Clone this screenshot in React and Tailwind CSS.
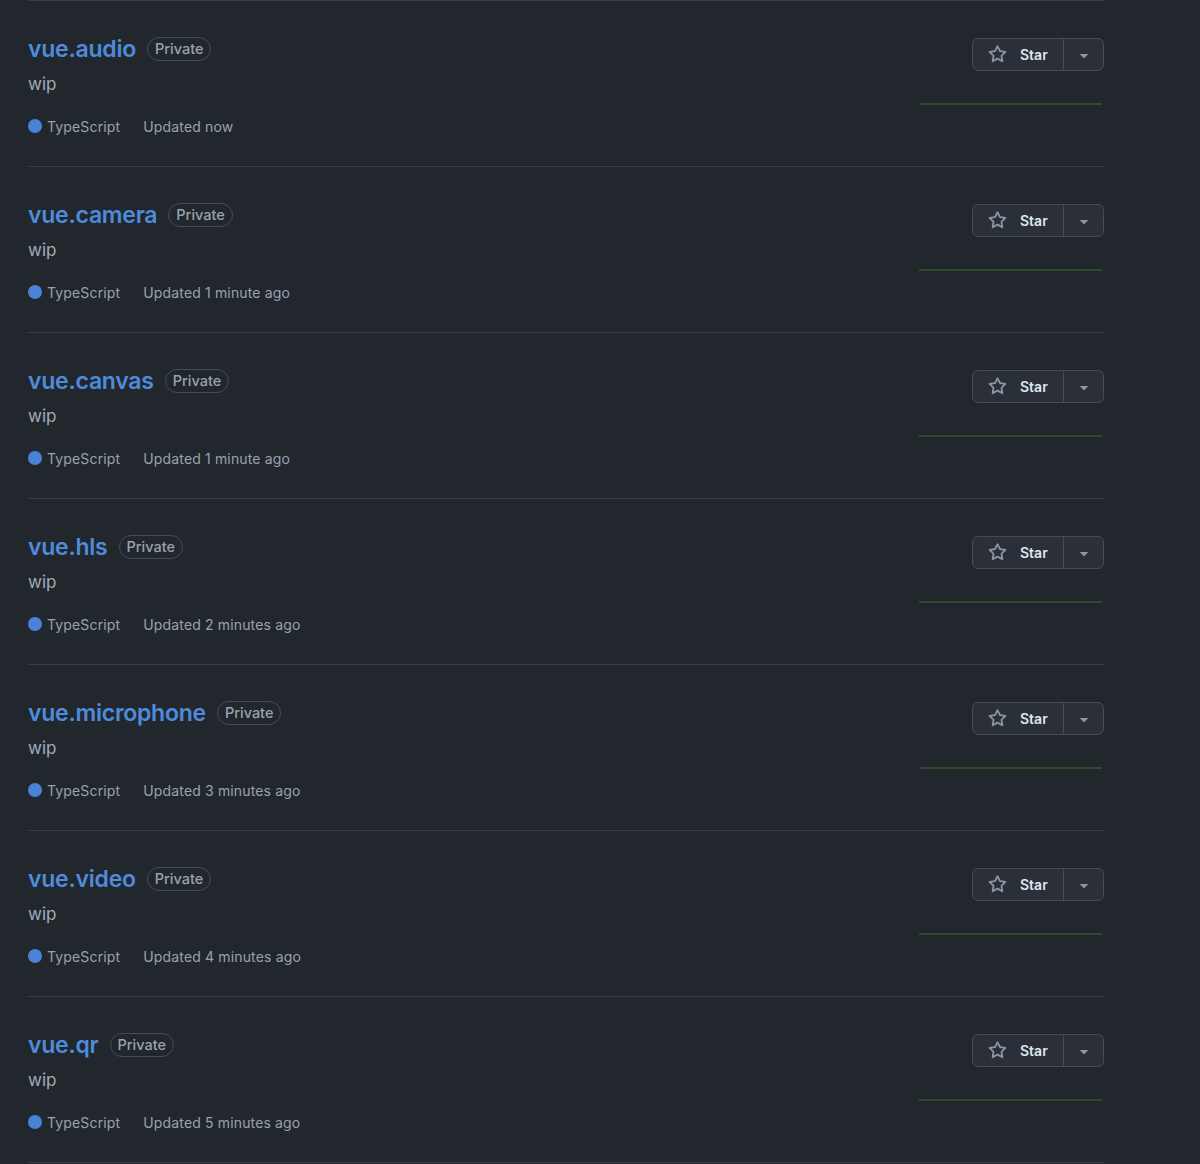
import React from "react";

const repos = [
  { name: "vue.audio", updated: "Updated now" },
  { name: "vue.camera", updated: "Updated 1 minute ago" },
  { name: "vue.canvas", updated: "Updated 1 minute ago" },
  { name: "vue.hls", updated: "Updated 2 minutes ago" },
  { name: "vue.microphone", updated: "Updated 3 minutes ago" },
  { name: "vue.video", updated: "Updated 4 minutes ago" },
  { name: "vue.qr", updated: "Updated 5 minutes ago" },
];

function StarIcon() {
  return (
    <svg width="19" height="19" viewBox="0 0 16 16" fill="#8b96a3">
      <path d="M8 .25a.75.75 0 0 1 .673.418l1.882 3.815 4.21.612a.75.75 0 0 1 .416 1.279l-3.046 2.97.719 4.192a.751.751 0 0 1-1.088.791L8 12.347l-3.766 1.98a.75.75 0 0 1-1.088-.79l.72-4.194L.818 6.374a.75.75 0 0 1 .416-1.28l4.21-.611L7.327.668A.75.75 0 0 1 8 .25Zm0 2.445L6.615 5.5a.75.75 0 0 1-.564.41l-3.097.45 2.24 2.184a.75.75 0 0 1 .216.664l-.528 3.084 2.769-1.456a.75.75 0 0 1 .698 0l2.77 1.456-.53-3.084a.75.75 0 0 1 .216-.664l2.24-2.183-3.096-.45a.75.75 0 0 1-.564-.41L8 2.694Z" />
    </svg>
  );
}

function Caret() {
  return (
    <svg width="18" height="18" viewBox="0 0 16 16" fill="#8b96a3">
      <path d="m4.427 7.427 3.396 3.396a.25.25 0 0 0 .354 0l3.396-3.396A.25.25 0 0 0 11.396 7H4.604a.25.25 0 0 0-.177.427Z" />
    </svg>
  );
}

function Row({ name, updated }) {
  return (
    <li className="flex justify-between border-b border-[#373e47] pt-[33px] pb-[30px]">
      <div className="flex flex-col">
        <div className="flex items-center h-[30px]">
          <span className="text-[23px] leading-[30px] font-semibold text-[#4f8bdb] tracking-[-0.25px]">{name}</span>
          <span className="ml-[11px] h-[24px] flex items-center rounded-full border border-[#444c56] px-[7px] text-[14.5px] font-medium text-[#98a3af]">
            Private
          </span>
        </div>
        <div className="mt-2 text-[17px] leading-[24px] text-[#a0abb7]">wip</div>
        <div className="mt-5 flex items-center h-5 text-[14px] text-[#98a2ae] tracking-[0.15px]">
          <span className="w-[14px] h-[14px] rounded-full bg-[#4a83d6] mr-[5px]"></span>
          <span>TypeScript</span>
          <span className="ml-[23px]">{updated}</span>
        </div>
      </div>
      <div className="flex flex-col items-end pt-[4px]">
        <div className="flex h-[33px] rounded-md border border-[#444c56] bg-[#2b3038]">
          <div className="flex items-center pl-[15px] pr-[14px] w-[91px] border-r border-[#444c56]">
            <StarIcon />
            <span className="ml-[13px] text-[14px] font-semibold text-[#dfe6ee]">Star</span>
          </div>
          <div className="flex items-center justify-center w-[39px]">
            <Caret />
          </div>
        </div>
        <div className="mt-[32px] mr-[2px] h-[2px] w-[183px] bg-[#2e4a2d]"></div>
      </div>
    </li>
  );
}

export default function App() {
  return (
    <div className="min-h-[1164px] bg-[#22272e] pl-[28px] pr-[96px]" style={{ fontFamily: "Inter, 'Noto Sans', sans-serif" }}>
      <ul className="border-t border-[#373e47] w-[1076px]">
        {repos.map((r) => (
          <Row key={r.name} {...r} />
        ))}
      </ul>
    </div>
  );
}
